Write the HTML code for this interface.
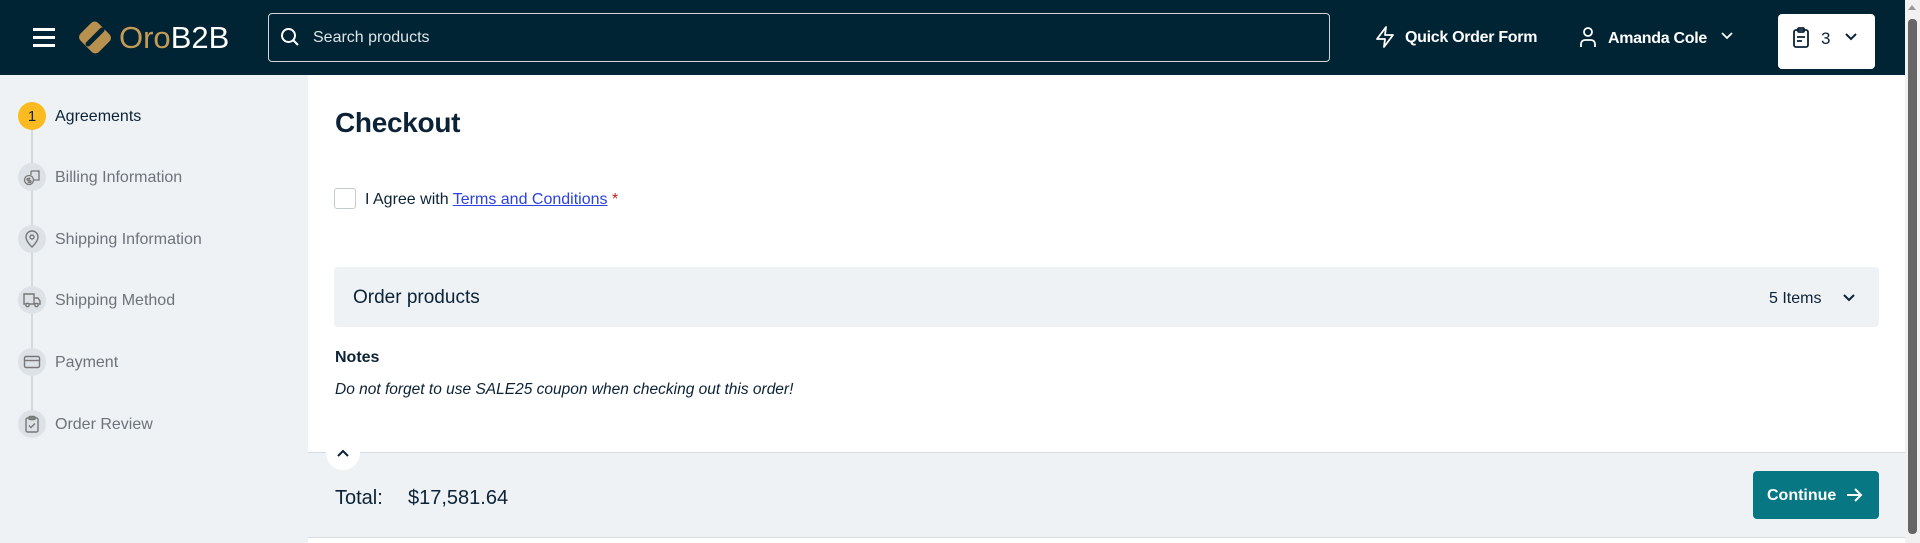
<!DOCTYPE html>
<html><head><meta charset="utf-8"><style>
*{box-sizing:border-box;margin:0;padding:0}
body{width:1920px;height:543px;overflow:hidden;background:#fff;font-family:"Liberation Sans",sans-serif;color:#0c2236;position:relative}
.hdr{position:absolute;left:0;top:0;width:1905px;height:75px;background:#002434}
.abs{position:absolute}
.side{position:absolute;left:0;top:75px;width:308px;height:468px;background:#eef2f5}
.step{position:absolute;left:18px;height:28px;display:flex;align-items:center}
.circ{width:28px;height:28px;border-radius:50%;background:#dde2e6;display:flex;align-items:center;justify-content:center}
.step span{margin-left:9px;font-size:16px;color:#6c737a;position:relative;top:1px}
.line{position:absolute;left:31px;top:128px;width:2px;height:296px;background:#d4d9dd}
.sb{position:absolute;left:1905px;top:0;width:15px;height:543px;background:#f1f1f1}
</style></head><body>
<div class="hdr">
 <div class="abs" style="left:33px;top:28px;width:22px;height:2.5px;background:#fff;box-shadow:0 8px 0 #fff,0 16px 0 #fff"></div>
 <svg class="abs" style="left:76px;top:19px" width="38" height="37" viewBox="0 0 38 37"><rect x="6" y="6" width="26" height="25" rx="5" transform="rotate(45 19 18.5)" fill="#b8914e"/><path d="M12 25 L26 11" stroke="#002434" stroke-width="5" stroke-linecap="round"/></svg>
 <div class="abs" style="left:119px;top:19px;font-size:31px;line-height:38px;color:#c49a55">Oro<span style="color:#fff">B2B</span></div>
 <div class="abs" style="left:268px;top:13px;width:1062px;height:49px;border:1px solid #cfd6db;border-radius:4px"></div>
 <svg class="abs" style="left:280px;top:27px" width="20" height="20" viewBox="0 0 20 20" fill="none" stroke="#fff" stroke-width="2"><circle cx="8.5" cy="8.5" r="6.5"/><path d="M13.5 13.5 18 18"/></svg>
 <div class="abs" style="left:313px;top:29px;font-size:16px;color:#dfe4e8">Search products</div>
 <svg class="abs" style="left:1375px;top:26px" width="20" height="22" viewBox="0 0 20 22" fill="none" stroke="#fff" stroke-width="1.8" stroke-linejoin="round"><path d="M11 1 2 13h8l-1 8 9-12h-8z"/></svg>
 <div class="abs" style="left:1405px;top:29px;font-size:16px;font-weight:bold;color:#fff;letter-spacing:-0.3px">Quick Order Form</div>
 <svg class="abs" style="left:1578px;top:26px" width="20" height="22" viewBox="0 0 20 22" fill="none" stroke="#fff" stroke-width="1.8"><circle cx="10" cy="6" r="4"/><path d="M3 21v-3a4 4 0 0 1 4-4h6a4 4 0 0 1 4 4v3"/></svg>
 <div class="abs" style="left:1608px;top:30px;font-size:16px;font-weight:bold;color:#fff;letter-spacing:-0.3px">Amanda Cole</div>
 <svg class="abs" style="left:1720px;top:31px" width="14" height="10" viewBox="0 0 14 10" fill="none" stroke="#fff" stroke-width="1.8"><path d="M2 2l5 5 5-5"/></svg>
 <div class="abs" style="left:1778px;top:14px;width:97px;height:55px;background:#fff;border-radius:4px"></div>
 <svg class="abs" style="left:1792px;top:27px" width="18" height="22" viewBox="0 0 18 22" fill="none" stroke="#0c2236" stroke-width="1.8"><rect x="2" y="3" width="14" height="17" rx="2"/><rect x="6" y="1" width="6" height="4" rx="1"/><path d="M5 10h8M5 14h5"/></svg>
 <div class="abs" style="left:1821px;top:29px;font-size:17px;color:#0c2236">3</div>
 <svg class="abs" style="left:1844px;top:32px" width="14" height="10" viewBox="0 0 14 10" fill="none" stroke="#0c2236" stroke-width="2"><path d="M2 2l5 5 5-5"/></svg>
</div>
<div class="side">
 <div class="line" style="top:42px"></div>
 <div class="step" style="top:27px"><div class="circ" style="background:#fbbb20;font-size:15px;color:#0c2236">1</div><span style="color:#0c2236">Agreements</span></div>
 <div class="step" style="top:88px"><div class="circ"><svg width="18" height="18" viewBox="0 0 18 18" fill="none" stroke="#777" stroke-width="1.3"><circle cx="6" cy="12" r="4.5"/><path d="M6 9.5v5M7.5 10.5h-2.5a1 1 0 0 0 0 2h2a1 1 0 0 1 0 2h-2.5M8 3h8v9h-5M8 3v4M14 3a2 2 0 0 1 2 2"/></svg></div><span>Billing Information</span></div>
 <div class="step" style="top:150px"><div class="circ"><svg width="18" height="18" viewBox="0 0 18 18" fill="none" stroke="#777" stroke-width="1.4"><path d="M9 17s-6-5.5-6-10a6 6 0 0 1 12 0c0 4.5-6 10-6 10z"/><circle cx="9" cy="7" r="2"/></svg></div><span>Shipping Information</span></div>
 <div class="step" style="top:211px"><div class="circ"><svg width="18" height="18" viewBox="0 0 18 18" fill="none" stroke="#777" stroke-width="1.4"><path d="M1 3h10v10H1zM11 7h4l2 3v3h-6"/><circle cx="4.5" cy="14" r="1.7" fill="#dde2e6"/><circle cx="13.5" cy="14" r="1.7" fill="#dde2e6"/></svg></div><span>Shipping Method</span></div>
 <div class="step" style="top:273px"><div class="circ"><svg width="18" height="18" viewBox="0 0 18 18" fill="none" stroke="#777" stroke-width="1.4"><rect x="1.5" y="3.5" width="15" height="11" rx="1.5"/><path d="M1.5 7.5h15"/></svg></div><span>Payment</span></div>
 <div class="step" style="top:335px"><div class="circ"><svg width="18" height="18" viewBox="0 0 18 18" fill="none" stroke="#777" stroke-width="1.4"><rect x="3" y="3" width="12" height="14" rx="1.5"/><rect x="6" y="1.5" width="6" height="3" rx="1"/><path d="M6 10.5l2 2 4-4"/></svg></div><span>Order Review</span></div>
</div>
<div class="abs" style="left:335px;top:107px;font-size:28px;font-weight:bold;color:#0c2236;letter-spacing:-0.3px">Checkout</div>
<div class="abs" style="left:334px;top:188px;width:22px;height:21px;border:1.5px solid #c2cbcf;border-radius:3px"></div>
<div class="abs" style="left:365px;top:191px;font-size:16px;color:#0c2236">I Agree with <span style="color:#2b41e0;text-decoration:underline">Terms and Conditions</span> <span style="color:#c0231b">*</span></div>
<div class="abs" style="left:334px;top:267px;width:1545px;height:60px;background:#eef2f5;border-radius:4px"></div>
<div class="abs" style="left:353px;top:287px;font-size:19px;color:#0c2236">Order products</div>
<div class="abs" style="left:1769px;top:290px;font-size:16px;color:#0c2236">5 Items</div>
<svg class="abs" style="left:1842px;top:293px" width="14" height="10" viewBox="0 0 14 10" fill="none" stroke="#0c2236" stroke-width="2"><path d="M2 2l5 5 5-5"/></svg>
<div class="abs" style="left:335px;top:349px;font-size:16px;font-weight:bold;color:#0c2236">Notes</div>
<div class="abs" style="left:335px;top:381px;font-size:15.5px;font-style:italic;color:#0c2236">Do not forget to use SALE25 coupon when checking out this order!</div>
<div class="abs" style="left:308px;top:452px;width:1597px;height:86px;background:#eef2f5;border-top:1px solid #d6dce0;border-bottom:1px solid #d6dce0"></div>
<div class="abs" style="left:326px;top:436px;width:34px;height:34px;border-radius:50%;background:#fff"></div>
<svg class="abs" style="left:336px;top:448px" width="14" height="10" viewBox="0 0 14 10" fill="none" stroke="#0c2236" stroke-width="2"><path d="M2 8l5-5 5 5"/></svg>
<div class="abs" style="left:335px;top:487px;font-size:20px;color:#0c2236">Total:</div>
<div class="abs" style="left:408px;top:487px;font-size:20px;color:#0c2236">$17,581.64</div>
<div class="abs" style="left:1753px;top:471px;width:126px;height:48px;background:#077783;border-radius:4px"></div>
<div class="abs" style="left:1767px;top:487px;font-size:16px;font-weight:bold;color:#fff">Continue</div>
<svg class="abs" style="left:1845px;top:486px" width="18" height="18" viewBox="0 0 18 18" fill="none" stroke="#fff" stroke-width="2"><path d="M2 9h14M10 3l6 6-6 6"/></svg>
<div class="sb"><div style="position:absolute;left:3px;top:19px;width:9px;height:515px;background:#666;border-radius:4px"></div><div style="position:absolute;left:3px;top:5px;border:4.5px solid transparent;border-bottom:5px solid #999;border-top:0"></div></div>
</body></html>
